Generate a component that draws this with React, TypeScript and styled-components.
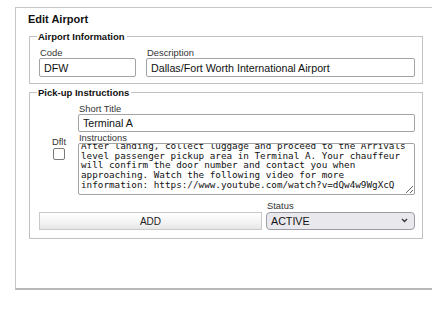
import React, { useEffect, useRef } from 'react';
import styled, { createGlobalStyle } from 'styled-components';

const GlobalStyle = createGlobalStyle`
  html, body {
    margin: 0;
    padding: 0;
    background: #fff;
    overflow: hidden;
    font-family: 'Liberation Sans', Arial, sans-serif;
    color: #222;
  }
`;

const Panel = styled.div`
  box-sizing: border-box;
  margin: 7px 0 0 15px;
  width: 417px;
  height: 283px;
  padding: 5px 0 0 13px;
  border: 1px solid #c6c6c6;
  border-right: none;
  border-bottom: 2px solid #b9b9b9;
`;

const Title = styled.div`
  font-size: 11px;
  line-height: 13px;
  font-weight: bold;
  color: #111;
  margin-left: -1px;
`;

const Group = styled.fieldset<{ $top: number; $bottom: number }>`
  box-sizing: border-box;
  width: 394px;
  margin: ${(p) => p.$top}px 0 0 0;
  padding: 5px 7px ${(p) => p.$bottom}px 9px;
  border: 1px solid #c2c2c2;
  min-width: 0;
`;

const Legend = styled.legend`
  font-size: 9.5px;
  line-height: 11px;
  font-weight: bold;
  color: #111;
  padding: 0 2px 0 1px;
  margin-left: -2px;
`;

const Row = styled.div`
  display: flex;
  gap: 10px;
`;

const Field = styled.div<{ $width: number }>`
  display: flex;
  flex-direction: column;
  width: ${(p) => p.$width}px;
`;

const Label = styled.label`
  font-size: 9.4px;
  line-height: 11px;
  color: #333;
  padding-left: 1px;
`;

const TextInput = styled.input<{ $height: number }>`
  box-sizing: border-box;
  width: 100%;
  height: ${(p) => p.$height}px;
  margin: 0;
  padding: 0 4px;
  border: 1px solid #a3a3a3;
  border-radius: 2px;
  font-family: 'Liberation Sans', Arial, sans-serif;
  font-size: 10.7px;
  color: #111;
  background: #fff;
  outline: none;
`;

const Split = styled.div`
  display: flex;
`;

const DfltCol = styled.div`
  width: 39px;
  display: flex;
  flex-direction: column;
  align-items: center;
  padding-top: 33px;
`;

const Check = styled.input`
  appearance: none;
  box-sizing: border-box;
  width: 12px;
  height: 12px;
  margin: 1px 0 0 0;
  border: 1px solid #7a7a7a;
  border-radius: 2px;
  background: #fff;
`;

const MainCol = styled.div`
  width: 337px;
  display: flex;
  flex-direction: column;
`;

const Instructions = styled.textarea`
  box-sizing: border-box;
  width: 100%;
  height: 52px;
  margin: 0;
  padding: 2px 3px 6px 2px;
  border: 1px solid #a3a3a3;
  border-radius: 2px;
  font-family: 'DejaVu Sans Mono', 'Liberation Mono', monospace;
  font-size: 9.3px;
  line-height: 9.7px;
  color: #111;
  overflow: hidden;
  resize: both;
  outline: none;
`;

const ActionRow = styled.div`
  display: flex;
  align-items: flex-end;
  gap: 4px;
  margin-top: 5px;
`;

const AddButton = styled.button`
  box-sizing: border-box;
  width: 223px;
  height: 18px;
  padding: 0;
  border: 1px solid #c9c9c9;
  background: linear-gradient(#ffffff, #f3f3f3 60%, #e6e6e6);
  font-family: 'Liberation Sans', Arial, sans-serif;
  font-size: 10px;
  color: #222;
`;

const SelectWrap = styled.div`
  position: relative;
  width: 149px;
`;

const Select = styled.select`
  appearance: none;
  box-sizing: border-box;
  width: 100%;
  height: 18px;
  margin: 0;
  padding: 0 0 0 4px;
  border: 1px solid #9c9ca6;
  border-radius: 4px;
  background: #e9e9ed;
  font-family: 'Liberation Sans', Arial, sans-serif;
  font-size: 10.7px;
  color: #111;
  outline: none;
`;

const Chevron = styled.svg`
  position: absolute;
  right: 7px;
  top: 7px;
  pointer-events: none;
`;

const text =
  'After landing, collect luggage and proceed to the Arrivals level passenger pickup area in Terminal A. Your chauffeur will confirm the door number and contact you when approaching. Watch the following video for more information: https://www.youtube.com/watch?v=dQw4w9WgXcQ';

const App = () => {
  const area = useRef<HTMLTextAreaElement>(null);

  useEffect(() => {
    if (area.current) area.current.scrollTop = 5;
  }, []);

  return (
    <>
      <GlobalStyle />
      <Panel>
        <Title>Edit Airport</Title>
        <Group $top={5} $bottom={6}>
          <Legend>Airport Information</Legend>
          <Row>
            <Field $width={97}>
              <Label>Code</Label>
              <TextInput $height={19} defaultValue='DFW' />
            </Field>
            <Field $width={269}>
              <Label>Description</Label>
              <TextInput $height={19} defaultValue='Dallas/Fort Worth International Airport' />
            </Field>
          </Row>
        </Group>
        <Group $top={3} $bottom={8}>
          <Legend>Pick-up Instructions</Legend>
          <Split>
            <DfltCol>
              <Label>Dflt</Label>
              <Check type='checkbox' />
            </DfltCol>
            <MainCol>
              <Label>Short Title</Label>
              <TextInput $height={18} defaultValue='Terminal A' />
              <Label>Instructions</Label>
              <Instructions ref={area} defaultValue={text} />
            </MainCol>
          </Split>
          <ActionRow>
            <AddButton>ADD</AddButton>
            <Field $width={149}>
              <Label>Status</Label>
              <SelectWrap>
                <Select defaultValue='ACTIVE'>
                  <option value='ACTIVE'>ACTIVE</option>
                  <option value='INACTIVE'>INACTIVE</option>
                </Select>
                <Chevron width='7' height='5' viewBox='0 0 7 5'>
                  <path d='M1 1 L3.5 3.5 L6 1' fill='none' stroke='#333' strokeWidth='1.3' />
                </Chevron>
              </SelectWrap>
            </Field>
          </ActionRow>
        </Group>
      </Panel>
    </>
  );
};

export default App;
